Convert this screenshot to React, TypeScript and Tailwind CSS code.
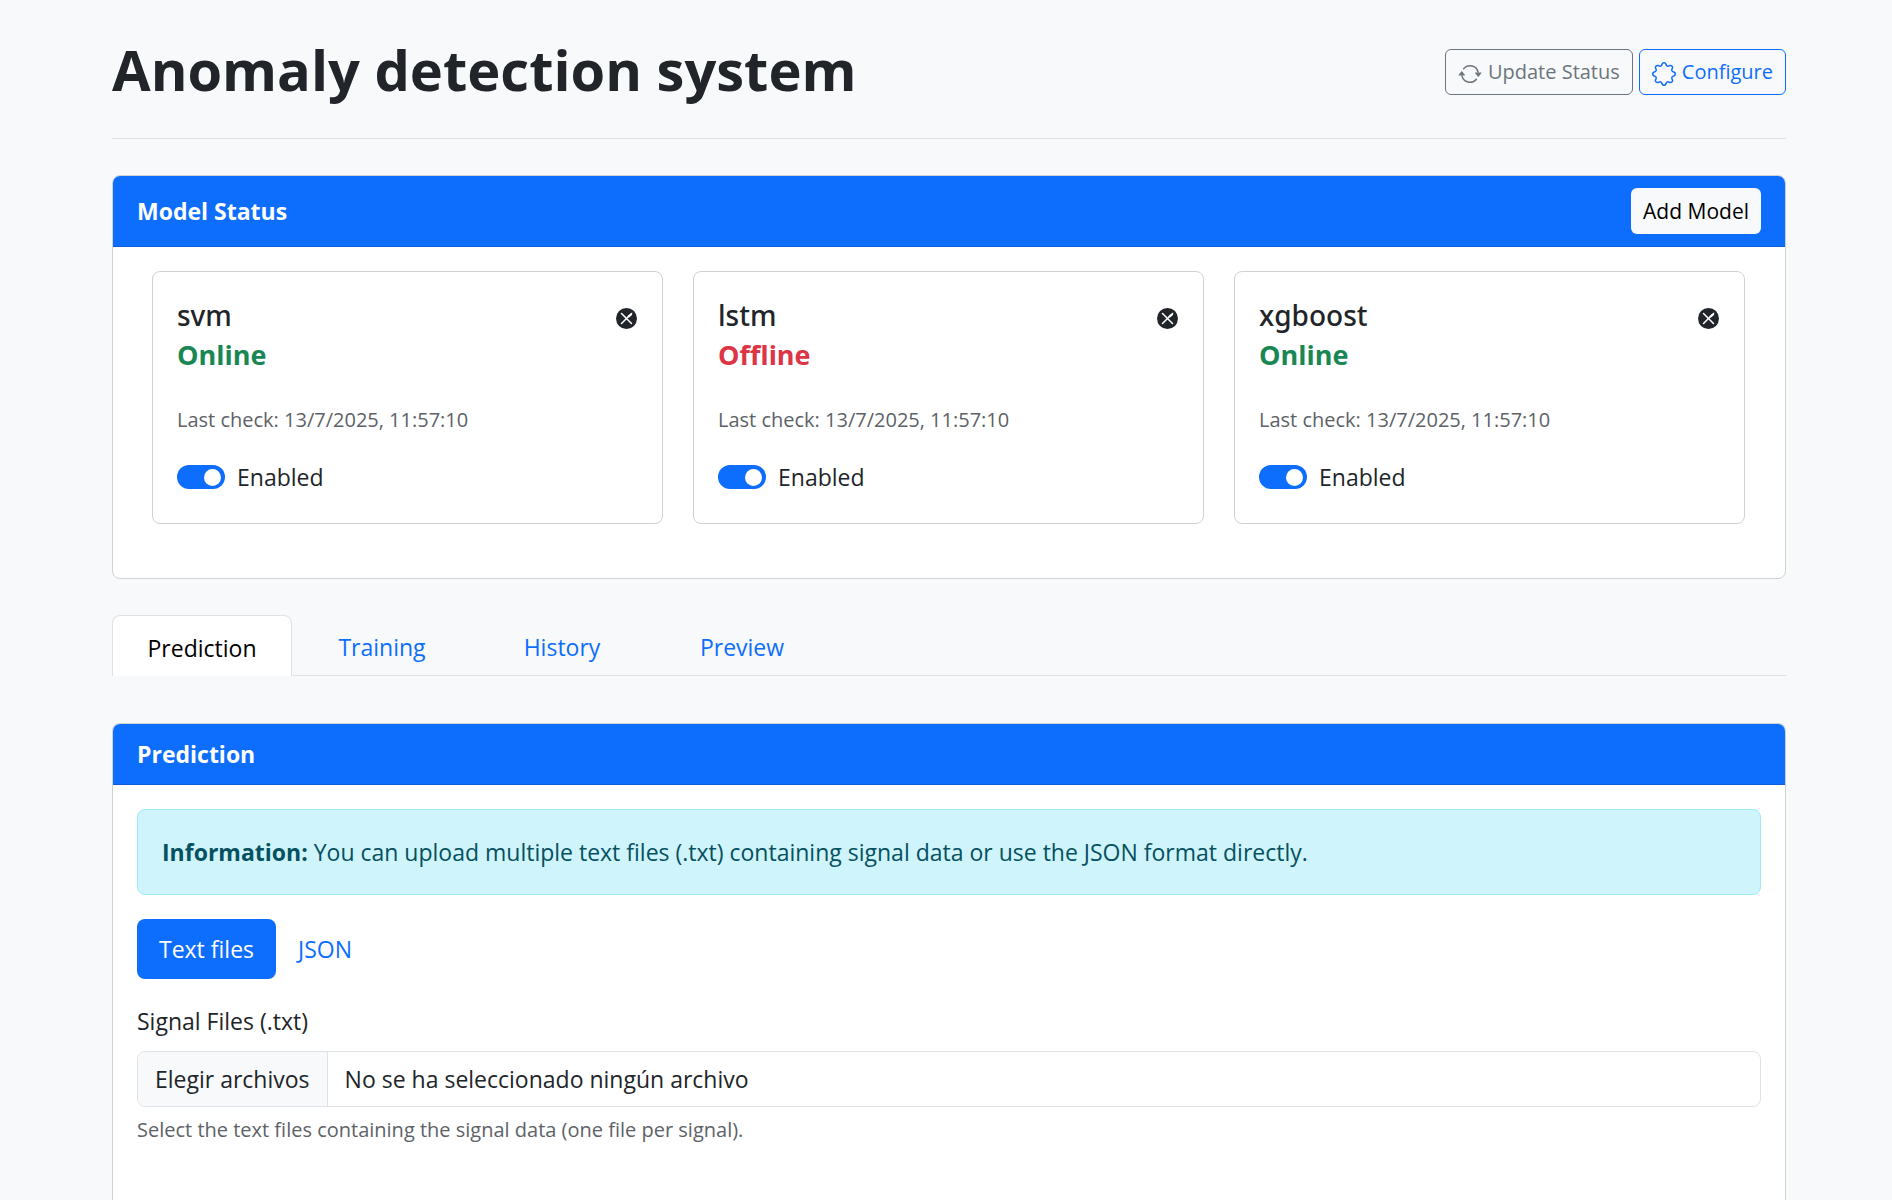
import { useState } from "react";
import { BsArrowRepeat } from "react-icons/bs";

type Model = { name: string; online: boolean; lastCheck: string };

const models: Model[] = [
  { name: "svm", online: true, lastCheck: "13/7/2025, 11:57:10" },
  { name: "lstm", online: false, lastCheck: "13/7/2025, 11:57:10" },
  { name: "xgboost", online: true, lastCheck: "13/7/2025, 11:57:10" },
];

const tabs = ["Prediction", "Training", "History", "Preview"];

function GearOutline() {
  return (
    <svg className="size-6 shrink-0" viewBox="0 0 16 16" fill="currentColor" aria-hidden="true">
      <path d="M7.7 4.35h.7v.3h-.7z" opacity=".6" />
      <path d="M9.796 1.343c-.527-1.79-3.065-1.79-3.592 0l-.094.319a.873.873 0 0 1-1.255.52l-.292-.16c-1.64-.892-3.433.902-2.54 2.541l.159.292a.873.873 0 0 1-.52 1.255l-.319.094c-1.79.527-1.79 3.065 0 3.592l.319.094a.873.873 0 0 1 .52 1.255l-.16.292c-.892 1.64.901 3.434 2.541 2.54l.292-.159a.873.873 0 0 1 1.255.52l.094.319c.527 1.79 3.065 1.79 3.592 0l.094-.319a.873.873 0 0 1 1.255-.52l.292.16c1.64.893 3.434-.902 2.54-2.541l-.159-.292a.873.873 0 0 1 .52-1.255l.319-.094c1.79-.527 1.79-3.065 0-3.592l-.319-.094a.873.873 0 0 1-.52-1.255l.16-.292c.893-1.64-.902-3.433-2.541-2.54l-.292.159a.873.873 0 0 1-1.255-.52zm-2.633.283c.246-.835 1.428-.835 1.674 0l.094.319a1.873 1.873 0 0 0 2.693 1.115l.291-.16c.764-.415 1.6.42 1.184 1.185l-.159.292a1.873 1.873 0 0 0 1.116 2.692l.318.094c.835.246.835 1.428 0 1.674l-.319.094a1.873 1.873 0 0 0-1.115 2.693l.16.291c.415.764-.42 1.6-1.185 1.184l-.291-.159a1.873 1.873 0 0 0-2.693 1.116l-.094.318c-.246.835-1.428.835-1.674 0l-.094-.319a1.873 1.873 0 0 0-2.692-1.115l-.292.16c-.764.415-1.6-.42-1.184-1.185l.159-.291A1.873 1.873 0 0 0 1.945 8.93l-.319-.094c-.835-.246-.835-1.428 0-1.674l.319-.094A1.873 1.873 0 0 0 3.06 4.377l-.16-.292c-.415-.764.42-1.6 1.185-1.184l.292.159a1.873 1.873 0 0 0 2.692-1.115z" />
    </svg>
  );
}

function RemoveIcon() {
  return (
    <svg className="size-[21px]" viewBox="0 0 16 16" aria-hidden="true">
      <circle cx="8" cy="8" r="8" fill="#212529" />
      <path d="M4.2 4.2 11.8 11.8M4.2 11.8 11.2 4.8" stroke="#fff" strokeWidth="1.15" strokeLinecap="round" />
      <path d="M8.6 6.2 12.4 3.2 12.2 5.4 9.8 7.4z" fill="#fff" />
    </svg>
  );
}

function ModelCard({ model }: { model: Model }) {
  const [enabled, setEnabled] = useState(true);
  return (
    <article className="rounded-lg border border-[#d0d1d2] bg-white px-6 pt-6 pb-7">
      <div className="flex items-start justify-between">
        <h3 className="font-['Noto_Sans',sans-serif] text-[28px] leading-[39px] font-medium">{model.name}</h3>
        <button type="button" aria-label={`Remove ${model.name}`} className="pt-3 pr-px">
          <RemoveIcon />
        </button>
      </div>
      <p className={model.online ? "text-[27px] leading-[39px] font-bold text-[#198754]" : "text-[27px] leading-[39px] font-bold text-[#dc3545]"}>
        {model.online ? "Online" : "Offline"}
      </p>
      <p className="mt-[31px] text-[20px] leading-[30px] text-[#5d6267]">Last check: {model.lastCheck}</p>
      <label className="mt-6 flex w-fit items-center gap-3 leading-9">
        <input type="checkbox" role="switch" className="peer sr-only" checked={enabled} onChange={(e) => setEnabled(e.target.checked)} />
        <span className="flex h-6 w-12 items-center rounded-full bg-[#adb5bd] p-1 peer-checked:justify-end peer-checked:bg-[#0d6efd]">
          <span className="size-[17px] rounded-full bg-white" />
        </span>
        Enabled
      </label>
    </article>
  );
}

export default function App() {
  const [tab, setTab] = useState("Prediction");
  return (
    <div className="flex min-h-screen flex-col bg-[#f8f9fa] pr-[106px] pl-28 font-['Open_Sans',sans-serif] text-[23px] text-[#212529]">
      <main className="flex grow flex-col">
        <header className="flex items-start justify-between border-b border-[#dee2e6] py-[33px]">
          <h1 className="text-[56px] leading-[72px] font-bold">Anomaly detection system</h1>
          <div className="mt-4 flex gap-1.5 text-[20px] leading-[30px]">
            <button type="button" className="flex items-center gap-1.5 rounded-md border border-[#6c757d] px-3 py-[7px] text-[#6c757d]">
              <BsArrowRepeat className="mt-1 size-6" aria-hidden="true" />
              Update Status
            </button>
            <button type="button" className="flex items-center gap-1.5 rounded-md border border-[#0d6efd] px-3 py-[7px] text-[#0d6efd]">
              <span className="mt-1"><GearOutline /></span>
              Configure
            </button>
          </div>
        </header>

        <section className="mt-9 overflow-hidden rounded-lg border border-[#d0d1d2] bg-white">
          <div className="flex items-center justify-between border-b border-[#0c5ed7] bg-[#0d6efd] px-6 py-3">
            <h2 className="leading-9 font-bold text-white">Model Status</h2>
            <button type="button" className="rounded-md bg-[#f8f9fa] px-3 py-2 text-[21px] leading-[30px] text-black">Add Model</button>
          </div>
          <div className="grid grid-cols-3 gap-[30px] pt-6 pr-10 pb-[54px] pl-[39px]">
            {models.map((m) => (
              <ModelCard key={m.name} model={m} />
            ))}
          </div>
        </section>

        <nav className="mt-9 flex border-b border-[#dee2e6]" role="tablist" aria-label="Sections">
          {tabs.map((t) => (
            <button
              key={t}
              type="button"
              role="tab"
              aria-selected={t === tab}
              onClick={() => setTab(t)}
              className={
                t === tab
                  ? "-mb-px h-[61px] w-[180px] rounded-t-lg border border-b-0 border-[#dee2e6] bg-white pt-1 text-black"
                  : "h-[60px] w-[180px] pt-1 text-[#0d6efd]"
              }
            >
              {t}
            </button>
          ))}
        </nav>

        <section className="mt-[47px] grow overflow-hidden rounded-t-lg border border-b-0 border-[#d0d1d2] bg-white">
          <div className="border-b border-[#0c5ed7] bg-[#0d6efd] px-6 py-3">
            <h2 className="leading-9 font-bold text-white">Prediction</h2>
          </div>
          <div className="p-6">
            <p className="rounded-lg border border-[#9eeaf9] bg-[#cff4fc] p-6 leading-9 text-[#055160]" role="status">
              <strong className="font-bold">Information:</strong> You can upload multiple text files (.txt) containing signal data or use the JSON format directly.
            </p>
            <div className="mt-6 flex" role="tablist" aria-label="Input format">
              <button type="button" role="tab" aria-selected="true" className="rounded-lg bg-[#0d6efd] px-[22px] py-3 leading-9 text-white">Text files</button>
              <button type="button" role="tab" aria-selected="false" className="rounded-lg px-[22px] py-3 leading-9 text-[#0d6efd]">JSON</button>
            </div>
            <label htmlFor="signal-files" className="mt-6 block w-fit leading-9">Signal Files (.txt)</label>
            <input id="signal-files" type="file" multiple accept=".txt" className="sr-only" aria-describedby="signal-help" />
            <label htmlFor="signal-files" className="mt-3 flex overflow-hidden rounded-lg border border-[#dee2e6] leading-[54px]">
              <span className="border-r border-[#dee2e6] bg-[#f8f9fa] px-[17px]">Elegir archivos</span>
              <span className="px-[17px]">No se ha seleccionado ningún archivo</span>
            </label>
            <p id="signal-help" className="mt-2 text-[20px] leading-[30px] text-[#5d6267]">Select the text files containing the signal data (one file per signal).</p>
          </div>
        </section>
      </main>
    </div>
  );
}
